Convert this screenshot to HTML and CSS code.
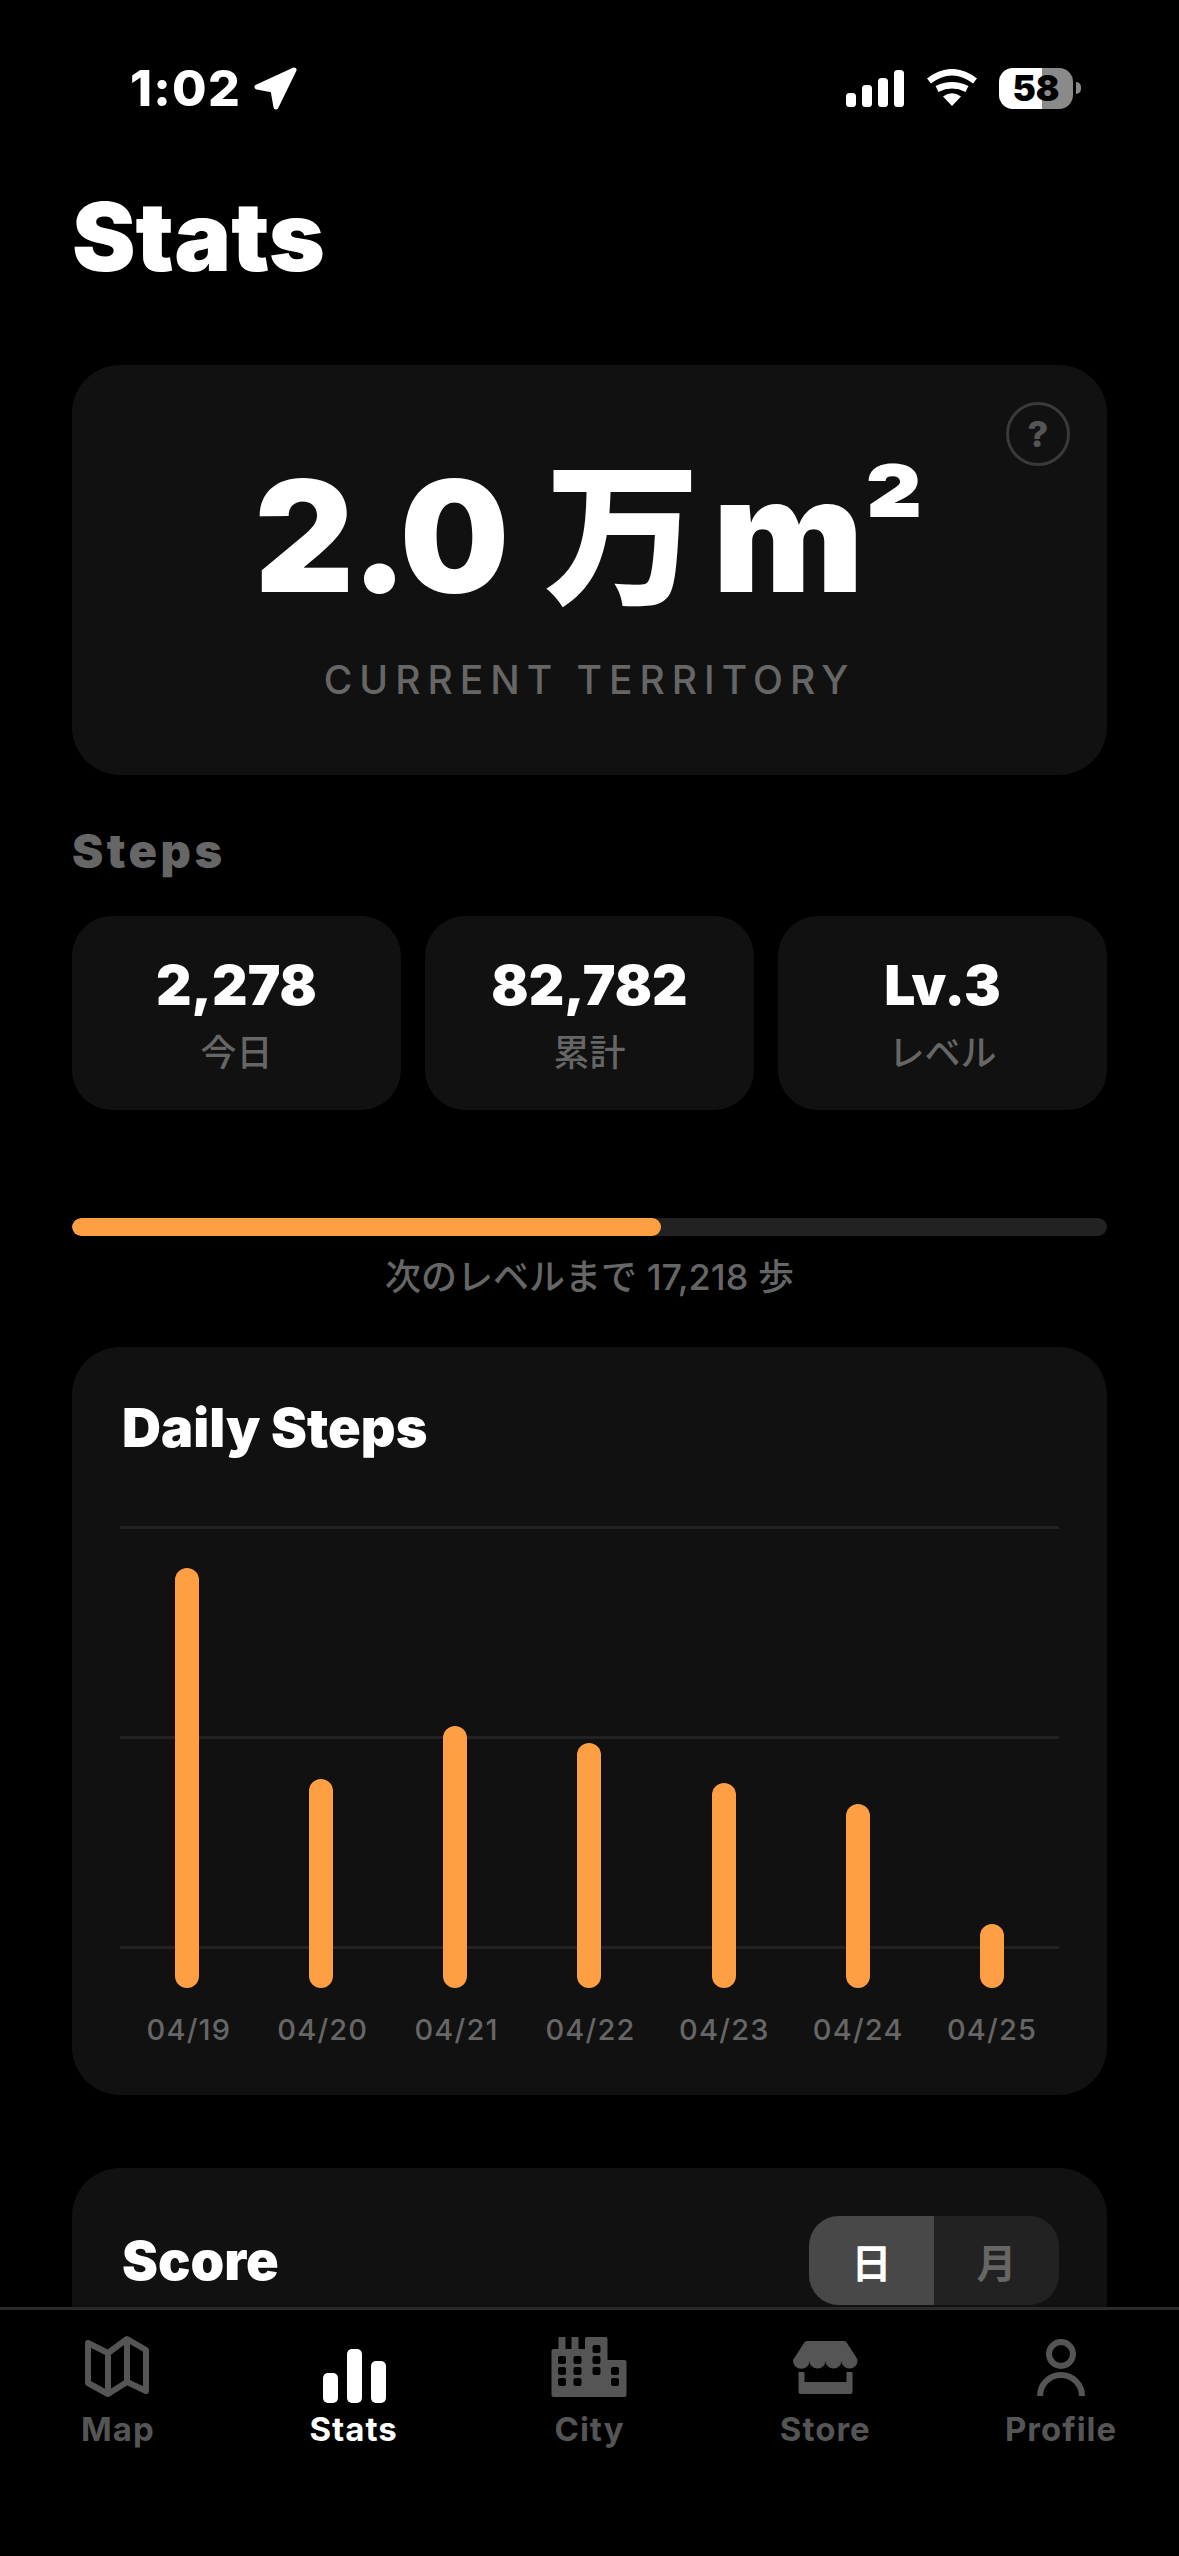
FILE: index.html
```html
<!DOCTYPE html>
<html lang="ja">
<head>
<meta charset="utf-8">
<title>Stats</title>
<link rel="stylesheet" href="styles.css">
</head>
<body>
<div class="screen">
  <header class="status">
    <div class="status-left">
      <span class="time">1:02</span>
      <svg class="arrow" viewBox="0 0 46 46"><path d="M42 4 L5 21 L21 24 L24 41Z" fill="#fff" stroke="#fff" stroke-width="5" stroke-linejoin="round"/></svg>
    </div>
    <div class="status-right">
      <svg class="signal" viewBox="0 0 58 37"><rect x="0" y="23" width="10" height="14" rx="3.5" fill="#fff"/><rect x="16" y="15" width="10" height="22" rx="3.5" fill="#fff"/><rect x="32" y="8" width="10" height="29" rx="3.5" fill="#fff"/><rect x="48" y="0" width="10" height="37" rx="3.5" fill="#fff"/></svg>
      <svg class="wifi" viewBox="0 0 52 38"><path d="M26 37 L17 27.5 Q26 21 35 27.5Z" fill="#fff"/><path d="M11 20 Q26 12.6 41 20" fill="none" stroke="#fff" stroke-width="6.5"/><path d="M3 12 Q26 -5.5 49 12" fill="none" stroke="#fff" stroke-width="6.5"/></svg>
      <div class="battery"><span class="battery-num">58</span></div>
      <span class="battery-nub"></span>
    </div>
  </header>

  <main class="content">
    <h1 class="title">Stats</h1>

    <section class="card hero">
      <span class="help">?</span>
      <div class="hero-value"><span class="hero-num">2.0</span><span class="hero-unit">万</span><span class="hero-m">m</span><span class="hero-sup">²</span></div>
      <div class="hero-label">CURRENT TERRITORY</div>
    </section>

    <h2 class="section-label">Steps</h2>
    <div class="stat-grid">
      <div class="stat"><div class="stat-num">2,278</div><div class="stat-name">今日</div></div>
      <div class="stat"><div class="stat-num">82,782</div><div class="stat-name">累計</div></div>
      <div class="stat"><div class="stat-num">Lv.3</div><div class="stat-name">レベル</div></div>
    </div>

    <div class="progress"><div class="progress-fill" style="width:56.9%"></div></div>
    <div class="progress-text">次のレベルまで 17,218 歩</div>

    <section class="card daily">
      <h3 class="card-title">Daily Steps</h3>
      <div class="chart">
        <div class="grid-lines"><i></i><i></i><i></i></div>
        <div class="bars">
          <div class="bar-col"><div class="bar" style="height:420px"></div></div>
          <div class="bar-col"><div class="bar" style="height:209px"></div></div>
          <div class="bar-col"><div class="bar" style="height:262px"></div></div>
          <div class="bar-col"><div class="bar" style="height:245px"></div></div>
          <div class="bar-col"><div class="bar" style="height:205px"></div></div>
          <div class="bar-col"><div class="bar" style="height:184px"></div></div>
          <div class="bar-col"><div class="bar" style="height:64px"></div></div>
        </div>
      </div>
      <div class="dates">
        <span>04/19</span><span>04/20</span><span>04/21</span><span>04/22</span><span>04/23</span><span>04/24</span><span>04/25</span>
      </div>
    </section>

    <section class="card score">
      <div class="score-head">
        <h3 class="card-title">Score</h3>
        <div class="segment">
          <span class="seg seg-on">日</span>
          <span class="seg">月</span>
        </div>
      </div>
    </section>
  </main>

  <nav class="tabbar">
    <div class="tab">
      <svg class="tab-icon" viewBox="0 0 80 80"><path d="M10 13 L30 23 L49 9 L68 20 V61 L49 52 L30 64 L10 53Z M30 23 V64 M49 9 V52" fill="none" stroke="#555" stroke-width="6" stroke-linejoin="round"/></svg>
      <span>Map</span>
    </div>
    <div class="tab tab-on">
      <svg class="tab-icon" viewBox="0 0 80 80"><rect x="9" y="43" width="15" height="30" rx="5" fill="#fff"/><rect x="33" y="19" width="15" height="54" rx="5" fill="#fff"/><rect x="57" y="31" width="15" height="42" rx="5" fill="#fff"/></svg>
      <span>Stats</span>
    </div>
    <div class="tab">
      <svg class="tab-icon" viewBox="0 0 80 80">
        <path d="M2.5 21 Q2.5 19 4.5 19 H9.5 V7 H16.5 V19 H22.5 V7 H29.5 V19 H36 V9 Q36 7 38 7 H56.5 Q58.5 7 58.5 9 V30 H75.5 Q77.5 30 77.5 32 V65 Q77.5 67 75.5 67 H4.5 Q2.5 67 2.5 65Z" fill="#555"/>
        <g fill="#000">
          <rect x="9" y="26" width="8" height="8" rx="2"/><rect x="24.5" y="26" width="8" height="8" rx="2"/>
          <rect x="9" y="37" width="8" height="8" rx="2"/><rect x="24.5" y="37" width="8" height="8" rx="2"/>
          <rect x="9" y="48" width="8" height="8" rx="2"/><rect x="24.5" y="48" width="8" height="8" rx="2"/>
          <rect x="43.5" y="15" width="8" height="8" rx="2"/><rect x="43.5" y="26" width="8" height="8" rx="2"/><rect x="43.5" y="37" width="8" height="8" rx="2"/>
          <rect x="62" y="37" width="8" height="8" rx="2"/><rect x="62" y="48" width="8" height="8" rx="2"/>
        </g>
      </svg>
      <span>City</span>
    </div>
    <div class="tab">
      <svg class="tab-icon" viewBox="0 0 80 80">
        <path d="M22 11 H59 Q61 11 62 13 L71 27 Q73 30 72.5 31 A8 7.5 0 0 1 56.5 31 A8 7.5 0 0 1 40.5 31 A8 7.5 0 0 1 24.5 31 A8 7.5 0 0 1 8 31 Q7.5 30 10 27 L19 13 Q20 11 22 11Z" fill="#555"/>
        <path d="M13.5 42 H19.5 V52 H61.5 V42 H67.5 V62 Q67.5 64 65.5 64 H15.5 Q13.5 64 13.5 62Z" fill="#555"/>
      </svg>
      <span>Store</span>
    </div>
    <div class="tab">
      <svg class="tab-icon" viewBox="0 0 80 80"><circle cx="40" cy="24" r="12" fill="none" stroke="#555" stroke-width="6"/><path d="M19 66 A21 21 0 0 1 61 66" fill="none" stroke="#555" stroke-width="6"/></svg>
      <span>Profile</span>
    </div>
  </nav>
</div>
</body>
</html>
```

FILE: styles.css
```css
* { box-sizing: border-box; }
html, body { margin: 0; padding: 0; background: #000; }
body { font-family: Inter, "Noto Sans CJK JP", sans-serif; color: #fff; }
h1, h2, h3 { margin: 0; }

.screen { position: relative; width: 1179px; height: 2556px; overflow: hidden; background: #000; }

.status { height: 137px; padding: 66px 98px 0 130px; display: flex; justify-content: space-between; align-items: flex-start; }
.status-left { display: flex; align-items: center; gap: 11px; }
.time { font-size: 50px; font-weight: 800; line-height: 44px; letter-spacing: 1.2px; padding-bottom: 2px; }
.arrow { width: 46px; height: 46px; }
.status-right { display: flex; align-items: center; height: 44px; }
.signal { width: 58px; height: 37px; margin-right: 22px; }
.wifi { width: 52px; height: 38px; margin-right: 21px; }
.battery { width: 74px; height: 41px; border-radius: 14px; background: linear-gradient(90deg, #fff 58%, #8a8a8a 58%); display: flex; align-items: center; justify-content: center; }
.battery-num { color: #000; font-size: 35px; font-weight: 900; line-height: 41px; }
.battery-nub { width: 5px; height: 12px; margin-left: 3px; background: #8a8a8a; border-radius: 0 6px 6px 0; }

.content { padding: 0 72px; }
.title { font-size: 95.5px; font-weight: 900; line-height: 96px; margin-top: 51px; }

.card { background: #111; border-radius: 48px; }
.hero { position: relative; height: 410px; margin-top: 81px; display: flex; flex-direction: column; align-items: center; padding-top: 70px; }
.help { position: absolute; top: 37px; right: 37px; width: 64px; height: 64px; border: 3px solid #3a3a3a; border-radius: 50%; color: #555; font-size: 36px; font-weight: 800; display: flex; align-items: center; justify-content: center; }
.hero-value { height: 180px; display: flex; align-items: baseline; font-weight: 900; line-height: 180px; white-space: nowrap; }
.hero-num { font-size: 154px; letter-spacing: -3.5px; }
.hero-unit { font-family: "Noto Sans CJK JP", sans-serif; font-size: 155px; margin: 0 13px 0 39px; }
.hero-m { font-size: 160px; }
.hero-sup { font-size: 128px; line-height: 0; transform: translateY(-20px); }
.hero-label { margin-top: 42px; font-size: 39px; font-weight: 500; line-height: 46px; letter-spacing: 7px; color: #666; }

.section-label { font-size: 47px; font-weight: 900; line-height: 54px; letter-spacing: 3.5px; color: #666; margin-top: 49px; }
.stat-grid { display: grid; grid-template-columns: repeat(3, 1fr); gap: 24px; margin-top: 38px; }
.stat { height: 194px; background: #111; border-radius: 40px; display: flex; flex-direction: column; align-items: center; padding-top: 36px; }
.stat-num { font-size: 55px; font-weight: 900; line-height: 66px; }
.stat-name { font-size: 36px; font-weight: 500; line-height: 48px; color: #666; margin-top: 11px; }

.progress { height: 18px; margin-top: 108px; background: #222; border-radius: 9px; overflow: hidden; }
.progress-fill { height: 100%; background: #ff9f43; border-radius: 9px; }
.progress-text { text-align: center; font-size: 36px; font-weight: 500; line-height: 48px; color: #666; margin-top: 17px; }

.daily { height: 748px; margin-top: 46px; padding: 48px; }
.card-title { font-size: 54px; font-weight: 900; line-height: 66px; padding-left: 2px; }
.chart { display: grid; height: 461px; margin-top: 66px; }
.grid-lines, .bars { grid-area: 1 / 1; }
.grid-lines { display: flex; flex-direction: column; gap: 207px; margin-top: -1px; }
.grid-lines i { display: block; height: 3px; background: #222; }
.bars { display: grid; grid-template-columns: repeat(7, 1fr); align-items: end; }
.bar-col { display: flex; justify-content: center; }
.bar { width: 24px; background: #ff9f43; border-radius: 12px; }
.dates { display: grid; grid-template-columns: repeat(7, 1fr); margin-top: 22px; padding-left: 2px; text-align: center; font-size: 29px; font-weight: 500; line-height: 40px; letter-spacing: 1.2px; color: #666; }

.score { height: 400px; margin-top: 73px; padding: 48px 48px 0; }
.score-head { display: flex; justify-content: space-between; align-items: center; }
.segment { width: 250px; height: 89px; border-radius: 30px; background: #222; display: grid; grid-template-columns: 125px 125px; overflow: hidden; }
.seg { display: flex; align-items: center; justify-content: center; font-family: "Noto Sans CJK JP", sans-serif; font-size: 40px; font-weight: 700; color: #666; }
.seg-on { background: #484848; color: #fff; }

.tabbar { position: absolute; left: 0; right: 0; bottom: 0; height: 249px; background: #000; border-top: 3px solid #2a2a2a; display: grid; grid-template-columns: repeat(5, 1fr); padding-top: 20px; }
.tab { display: flex; flex-direction: column; align-items: center; color: #555; font-size: 33px; font-weight: 650; line-height: 40px; letter-spacing: 1px; }
.tab-icon { width: 80px; height: 80px; display: block; margin-bottom: -1px; }
.tab-on { color: #fff; }
```
